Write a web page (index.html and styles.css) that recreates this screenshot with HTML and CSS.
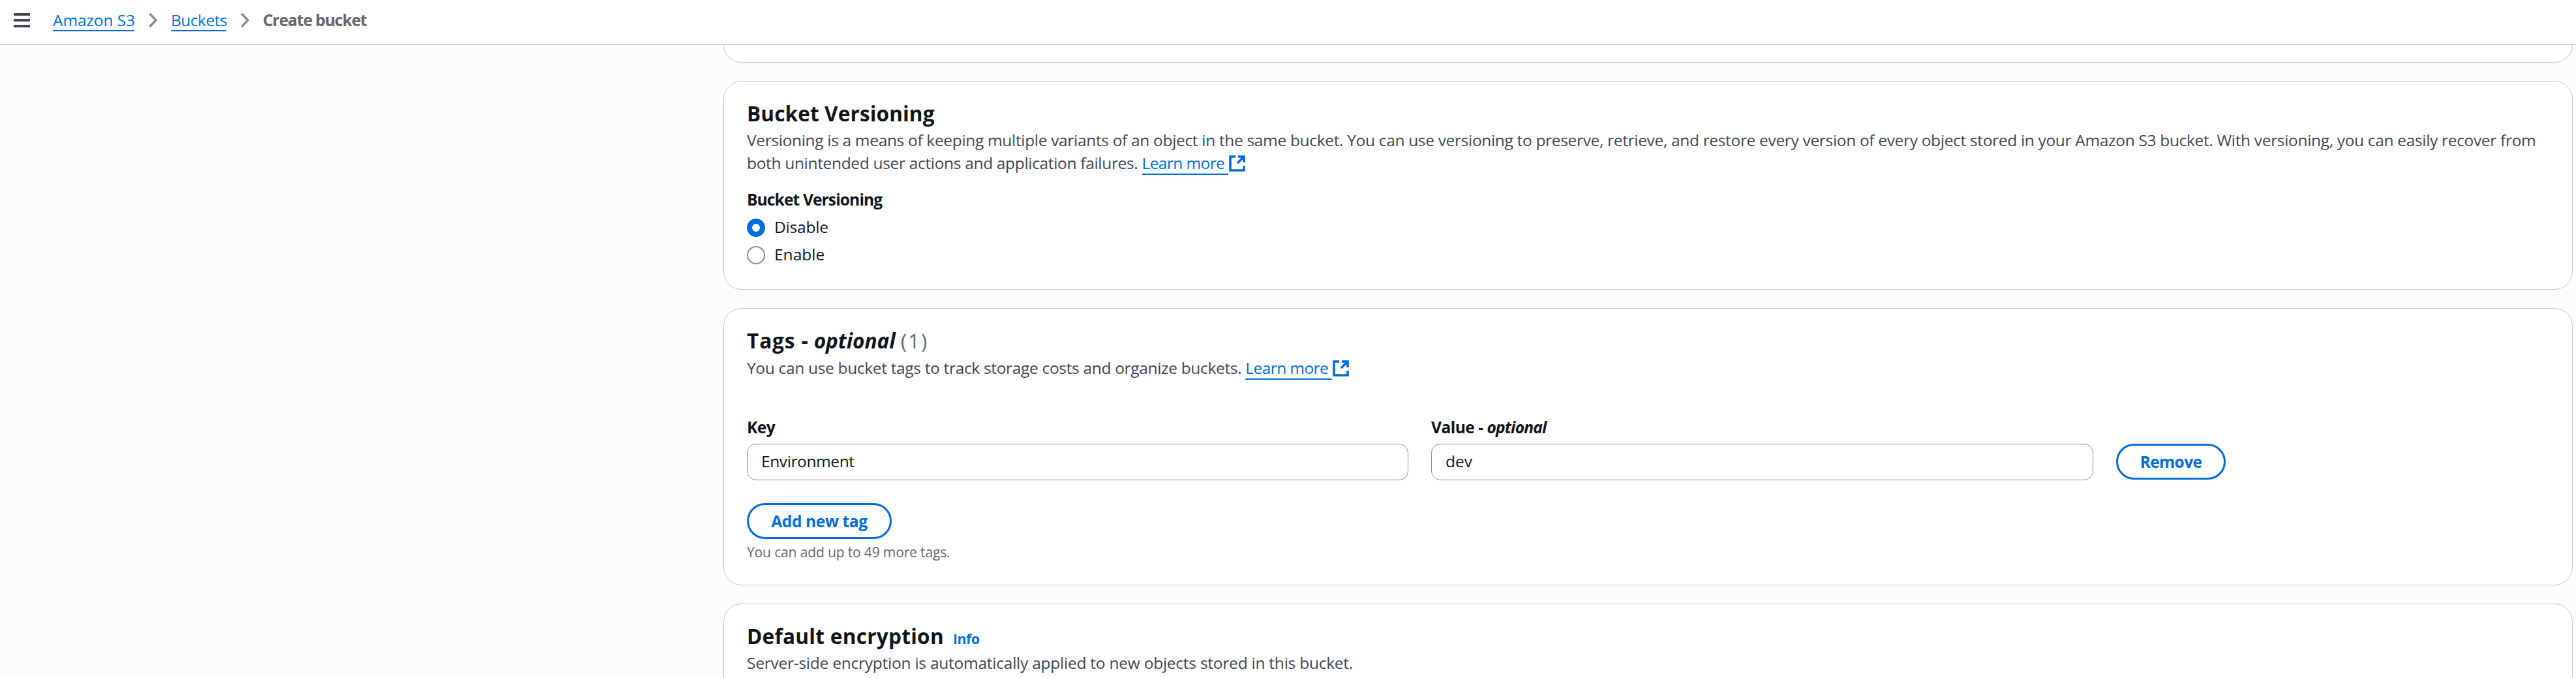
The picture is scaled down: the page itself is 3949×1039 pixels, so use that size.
FILE: index.html
```html
<!DOCTYPE html>
<html lang="en">
<head>
<meta charset="utf-8">
<title>Create bucket</title>
<link rel="stylesheet" href="styles.css">
</head>
<body>
<header class="topbar">
  <svg class="menu-icon" viewBox="0 0 25 22"><path d="M0 2h25M0 11h25M0 20h25"/></svg>
  <nav class="breadcrumbs">
    <a class="link crumb-service" href="#">Amazon S3</a>
    <svg class="chevron" viewBox="0 0 14 24"><path d="M1.5 2l9.5 10-9.5 10"/></svg>
    <a class="link crumb-buckets" href="#">Buckets</a>
    <svg class="chevron" viewBox="0 0 14 24"><path d="M1.5 2l9.5 10-9.5 10"/></svg>
    <span class="crumb-current">Create bucket</span>
  </nav>
</header>
<main class="content">
  <section class="card card-previous"></section>

  <section class="card card-versioning">
    <h2 class="title title-versioning">Bucket Versioning</h2>
    <p class="description">Versioning is a means of keeping multiple variants of an object in the same bucket. You can use versioning to preserve, retrieve, and restore every version of every object stored in your Amazon S3 bucket. With versioning, you can easily recover from both unintended user actions and application failures. <a class="link learn-more" href="#">Learn more</a><svg class="external" viewBox="0 0 25 25"><path d="M10 2H2v21h21v-7M14 2h9v9M22.500 2.500L13 12"/></svg></p>
    <div class="field-label label-versioning">Bucket Versioning</div>
    <label class="option"><span class="radio radio-checked"></span><span class="option-disable">Disable</span></label>
    <label class="option"><span class="radio"></span><span class="option-enable">Enable</span></label>
  </section>

  <section class="card card-tags">
    <h2 class="title"><span class="title-tags">Tags -</span> <em class="title-optional">optional</em> <span class="counter">(1)</span></h2>
    <p class="description">You can use bucket tags to track storage costs and organize buckets. <a class="link learn-more" href="#">Learn more</a><svg class="external" viewBox="0 0 25 25"><path d="M10 2H2v21h21v-7M14 2h9v9M22.500 2.500L13 12"/></svg></p>
    <div class="tag-row">
      <div class="field">
        <div class="field-label">Key</div>
        <div class="input input-key">Environment</div>
      </div>
      <div class="field">
        <div class="field-label">Value - <em class="label-optional">optional</em></div>
        <div class="input">dev</div>
      </div>
      <button class="button button-remove">Remove</button>
    </div>
    <button class="button button-add">Add new tag</button>
    <div class="hint">You can add up to 49 more tags.</div>
  </section>

  <section class="card card-encryption">
    <h2 class="title title-encryption">Default encryption<a class="info" href="#">Info</a></h2>
    <p class="description description-encryption">Server-side encryption is automatically applied to new objects stored in this bucket.</p>
  </section>
</main>
</body>
</html>
```
FILE: styles.css
```css
* {
  box-sizing: border-box;
}

body {
  margin: 0;
  height: 1039px;
  overflow: hidden;
  display: flex;
  flex-direction: column;
  background: #fcfcfd;
  color: #0f141a;
  font-family: "Open Sans", "Noto Sans", sans-serif;
  font-size: 24.5px;
  line-height: 35px;
}

/* Breadcrumb bar */
.topbar {
  flex: none;
  height: 69px;
  display: flex;
  align-items: flex-start;
  padding: 13px 0 0 21px;
  background: #fff;
  border-bottom: 1px solid #c6c6cd;
}

.menu-icon {
  width: 25px;
  height: 22px;
  margin: 7px 35px 0 0;
  fill: none;
  stroke: #424650;
  stroke-width: 4;
}

.breadcrumbs {
  display: flex;
  white-space: nowrap;
}

.link {
  color: #006ce0;
  text-decoration: none;
  border-bottom: 2px solid #006ce0;
}

.breadcrumbs .link {
  height: 35px;
}

.crumb-service {
  width: 125px;
  letter-spacing: -0.1px;
}

.crumb-buckets {
  width: 85px;
  letter-spacing: -0.5px;
}

.crumb-current {
  color: #656871;
  font-weight: 700;
  letter-spacing: -1px;
}

.chevron {
  width: 14px;
  height: 24px;
  margin: 6px 20px 0 22px;
  fill: none;
  stroke: #8c8c94;
  stroke-width: 3.5;
}

/* Form sections */
.content {
  flex: none;
  width: 2835px;
  margin-left: 1109px;
  display: flex;
  flex-direction: column;
  gap: 28px;
}

.card {
  padding: 28px 35px 35px;
  background: #fff;
  border: 1px solid #c6c6cd;
  border-radius: 28px;
}

.card-previous {
  height: 27px;
  padding: 0;
  border-top: 0;
  border-radius: 0 0 28px 28px;
}

.card-versioning,
.card-tags {
  padding-bottom: 36px;
}

.title {
  margin: 0 0 2px;
  font-size: 31.5px;
  line-height: 42px;
  font-weight: 700;
}

.title-versioning {
  letter-spacing: 0.15px;
}

.title-tags {
  letter-spacing: 0.9px;
}

.title-optional {
  letter-spacing: 0;
}

.counter {
  color: #656871;
  font-weight: 400;
  letter-spacing: 1.9px;
}

.title-encryption {
  letter-spacing: 0.3px;
}

.info {
  margin-left: 14px;
  color: #006ce0;
  font-size: 21px;
  line-height: 21px;
  letter-spacing: -0.3px;
  text-decoration: none;
}

.description {
  margin: 0;
  color: #424650;
  letter-spacing: -0.327px;
}

.description-encryption {
  letter-spacing: -0.24px;
}

.learn-more {
  padding-right: 6px;
  letter-spacing: -0.6px;
}

.external {
  width: 25px;
  height: 25px;
  margin-left: 1px;
  vertical-align: -4px;
  fill: none;
  stroke: #006ce0;
  stroke-width: 3.6;
}

.field-label {
  font-weight: 700;
  letter-spacing: -0.5px;
}

.label-versioning {
  margin: 21px 0 7px;
  letter-spacing: -0.85px;
}

.label-optional {
  letter-spacing: -0.75px;
}

.option {
  display: flex;
  align-items: flex-start;
  height: 35px;
  margin-top: 7px;
}

.radio {
  width: 28px;
  height: 28px;
  margin: 5px 14px 0 0;
  border: 2px solid #8c8c94;
  border-radius: 50%;
}

.radio-checked {
  border: 8px solid #006ce0;
}

.option-disable {
  letter-spacing: -0.2px;
}

/* Tags */
.card-tags .title {
  margin-bottom: 3px;
}

.tag-row {
  display: grid;
  grid-template-columns: 1014px 1015px 168px;
  column-gap: 35px;
  align-items: end;
  margin-top: 56px;
}

.input {
  height: 56px;
  margin-top: 8px;
  padding: 8px 21px;
  border: 1px solid #8c8c94;
  border-radius: 14px;
}

.input-key {
  letter-spacing: -0.4px;
}

.button {
  display: block;
  height: 55px;
  padding: 0 0 1px;
  background: #fff;
  border: 3px solid #006ce0;
  border-radius: 28px;
  color: #006ce0;
  font: inherit;
  font-weight: 700;
}

.button-remove {
  margin-bottom: 1px;
  letter-spacing: -0.6px;
}

.button-add {
  width: 222px;
  margin-top: 35px;
  letter-spacing: -0.35px;
}

.hint {
  margin-top: 6px;
  color: #656871;
  font-size: 21px;
  line-height: 28px;
  letter-spacing: -0.14px;
}
```
